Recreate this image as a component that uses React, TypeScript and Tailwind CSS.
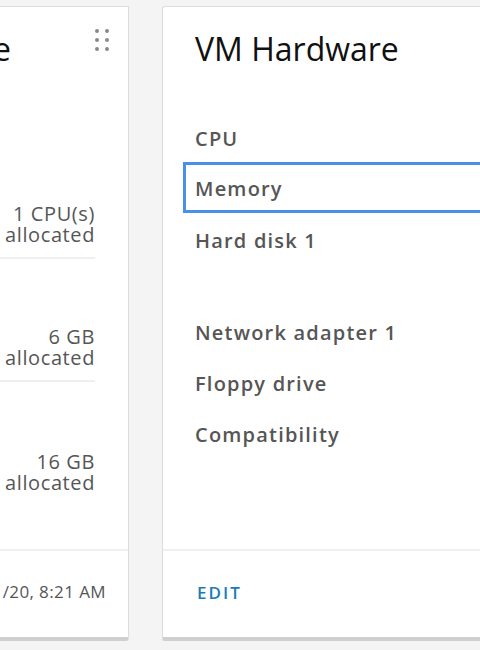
const font = { fontFamily: '"Open Sans", "Liberation Sans", sans-serif' };

const hardware = ["CPU", "Memory", "Hard disk 1"];
const hardware2 = ["Network adapter 1", "Floppy drive", "Compatibility"];

const usage = [
  { top: "1 CPU(s)", bottom: "allocated" },
  { top: "6 GB", bottom: "allocated" },
  { top: "16 GB", bottom: "allocated" },
];

function DragHandle() {
  return (
    <div className="grid shrink-0 grid-cols-2 gap-x-[6px] gap-y-[5px]">
      {Array.from({ length: 6 }).map((_, i) => (
        <span key={i} className="block h-[4px] w-[4px] rounded-full bg-[#8a8a8a]" />
      ))}
    </div>
  );
}

function HwItem({ label, active }: { label: string; active?: boolean }) {
  return (
    <div
      className={
        active
          ? "flex h-[51px] items-center border-[3px] border-[#4a8fe8] pl-[9px] pt-[3px] text-[20px] font-semibold tracking-[1.2px] text-[#565656]"
          : "flex h-[51px] items-center pl-[12px] pt-[5px] text-[20px] font-semibold tracking-[1.2px] text-[#565656]"
      }
    >
      {label}
    </div>
  );
}

export default function App() {
  return (
    <div className="flex h-[650px] w-[480px] overflow-hidden bg-[#f4f4f4] pt-[6px]" style={font}>
      {/* usage card, mostly off screen to the left */}
      <div className="flex h-[635px] w-[129px] shrink-0 flex-col overflow-hidden rounded-br-[3px] border-r border-b-[4px] border-t border-[#dcdcdc] border-b-[#cfcfcf] bg-white">
        <div className="flex h-[129px] items-start justify-end pr-[19px] pt-[22px]">
          <span className="whitespace-nowrap text-[32px] leading-[40px] text-[#111]">Usage</span>
          <span className="w-[84px] shrink-0" />
          <DragHandle />
        </div>
        <div className="flex flex-col pr-[33px]">
          {usage.map((u, i) => (
            <div
              key={i}
              className={
                i < 2
                  ? "flex h-[123px] flex-col items-end justify-end border-b-2 border-[#efefef] pb-[12px] text-[20px] leading-[21px] tracking-[0.6px] text-[#565656]"
                  : "flex h-[123px] flex-col items-end justify-end pb-[12px] text-[20px] leading-[21px] tracking-[0.6px] text-[#565656]"
              }
            >
              <span className="whitespace-nowrap">{u.top}</span>
              <span className="whitespace-nowrap">{u.bottom}</span>
            </div>
          ))}
        </div>
        <div className="flex-1" />
        <div className="flex h-[88px] items-center justify-end border-t-2 border-[#efefef] pr-[22px] pb-[4px]">
          <span className="whitespace-nowrap text-[17px] tracking-[0.4px] text-[#565656]">Last updated 3/31/20, 8:21 AM</span>
        </div>
      </div>

      <div className="w-[33px] shrink-0" />

      {/* VM hardware card */}
      <div className="flex h-[635px] w-[340px] shrink-0 flex-col rounded-l-[3px] border-l border-t border-b-[4px] border-[#dcdcdc] border-b-[#cfcfcf] bg-white">
        <div className="h-[104px] pl-[32px] pt-[22px] text-[32px] leading-[40px] text-[#111]">VM Hardware</div>
        <div className="flex flex-col pl-[20px]">
          {hardware.map((h) => (
            <HwItem key={h} label={h} active={h === "Memory"} />
          ))}
          <div className="h-[41px]" />
          {hardware2.map((h) => (
            <HwItem key={h} label={h} />
          ))}
        </div>
        <div className="flex-1" />
        <div className="flex h-[88px] items-center border-t-2 border-[#efefef] pl-[34px] pb-[2px]">
          <span className="text-[17px] font-semibold tracking-[2px] text-[#1a7cb6]">EDIT</span>
        </div>
      </div>
    </div>
  );
}
